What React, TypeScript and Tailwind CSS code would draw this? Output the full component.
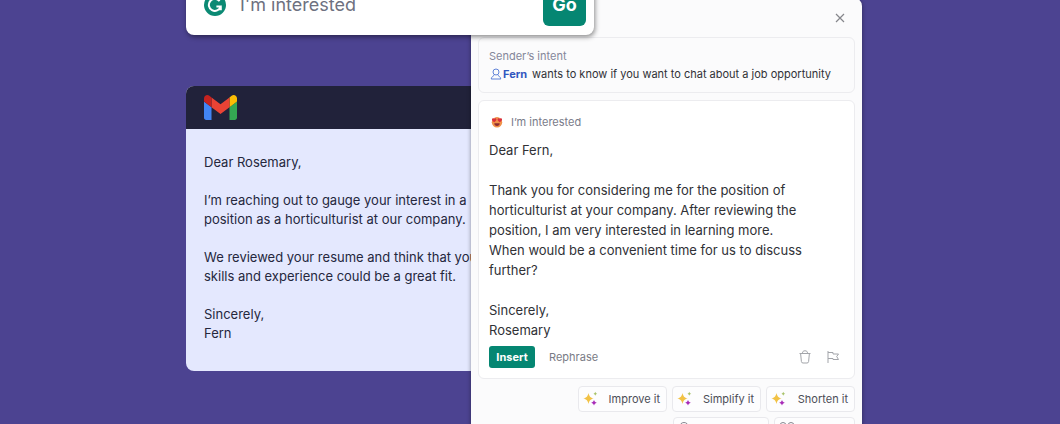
import React from 'react';

interface Action {
  label: string;
}

const actions: Action[] = [
  { label: 'Improve it' },
  { label: 'Simplify it' },
  { label: 'Shorten it' },
];

const GrammarlyLogo = () => (
  <svg className="size-[22px] shrink-0" viewBox="0 0 22 22" fill="none">
    <circle cx="11" cy="11" r="11" fill="#0b8a74" />
    <path
      d="M15.6 7.2A6 6 0 1 0 16.6 12.6H12.4M16.8 12.6V16.2"
      stroke="white"
      strokeWidth="2"
    />
  </svg>
);

const GmailLogo = () => (
  <svg className="h-[25px] w-[33px]" viewBox="52 42 88 66">
    <path fill="#4285f4" d="M58 108h14V74L52 59v43c0 3.32 2.69 6 6 6" />
    <path fill="#34a853" d="M120 108h14c3.32 0 6-2.69 6-6V59l-20 15" />
    <path fill="#fbbc04" d="M120 48v26l20-15v-8c0-7.42-8.47-11.65-14.4-7.2" />
    <path fill="#ea4335" d="M72 74V48l24 18 24-18v26L96 92" />
    <path fill="#c5221f" d="M52 51v8l20 15V48l-5.6-4.2c-5.94-4.45-14.4-.22-14.4 7.2" />
  </svg>
);

const PersonIcon = () => (
  <svg className="size-3 shrink-0" viewBox="0 0 12 12" fill="none" stroke="#5f82d8">
    <circle cx="6" cy="4" r="3" />
    <path d="M4.4 6.6C4.2 8 1.5 8.2 1.2 11h9.6C10.5 8.2 7.8 8 7.6 6.6" strokeLinejoin="round" />
  </svg>
);

const HeartEyesIcon = () => (
  <svg className="size-3 shrink-0" viewBox="0 0 12 12">
    <circle cx="6" cy="6.2" r="5.2" fill="#f0914a" />
    <path
      fill="#d9303e"
      d="M3.2 6.2C1 4.8.6 3.5 1.2 2.7c.6-.7 1.6-.5 2 .3.4-.8 1.4-1 2-.3.6.8.2 2.1-2 3.5zM8.8 6.2C6.6 4.8 6.2 3.5 6.8 2.7c.6-.7 1.6-.5 2 .3.4-.8 1.4-1 2-.3.6.8.2 2.1-2 3.5z"
    />
    <path fill="#8e2c30" d="M3.3 7.2h5.4c0 1.7-1.2 2.8-2.7 2.8S3.3 8.9 3.3 7.2z" />
  </svg>
);

const CloseIcon = () => (
  <svg className="size-[10px]" viewBox="0 0 10 10" stroke="#85868c" strokeWidth="1.2">
    <path d="M1 1l8 8M9 1L1 9" />
  </svg>
);

const TrashIcon = () => (
  <svg className="h-[14px] w-3" viewBox="0 0 12 14" fill="none" stroke="#a3a5aa">
    <path d="M.5 3.500h11M3.500 3.200C3.500 1.500 4.300.8 6 .8s2.500.7 2.500 2.400M1.600 3.500l.8 8c.1 1 .6 1.500 1.600 1.500h4c1 0 1.500-.5 1.600-1.500l.8-8" />
  </svg>
);

const FlagIcon = () => (
  <svg className="size-3" viewBox="0 0 12 12" fill="none" stroke="#a3a5aa">
    <path d="M1 0v12M1 1.500h5v1.500h5.500L9.700 5.500l1.800 3H6V7.500H1" />
  </svg>
);

const SparkleIcon = () => (
  <svg className="size-4 shrink-0" viewBox="0 0 16 16">
    <path fill="#f2c245" d="M5.500 2c.8 3.300 1.800 4.600 5.200 5.500-3.400.9-4.400 2.200-5.200 5.500C4.700 9.700 3.700 8.400.3 7.500 3.700 6.600 4.700 5.300 5.500 2z" />
    <path fill="#a9c36b" d="M12.300.8c.4 1.200.8 1.600 2 2-1.200.4-1.600.8-2 2-.4-1.200-.8-1.600-2-2 1.200-.4 1.600-.8 2-2z" />
    <path fill="#a82bb8" d="M11 9c.6 1.700 1.100 2.200 2.800 2.800-1.700.6-2.200 1.100-2.800 2.800-.6-1.700-1.100-2.200-2.800-2.800C9.900 11.200 10.400 10.700 11 9z" />
  </svg>
);

const PromptBar = () => (
  <form className="z-20 col-span-2 col-start-1 row-start-1 flex items-center gap-[14px] self-start rounded-lg bg-white py-[9px] pr-2 pl-[18px] shadow-[1px_2px_5px_rgba(0,0,0,0.45)]">
    <GrammarlyLogo />
    <input
      type="text"
      aria-label="Prompt"
      defaultValue="I'm interested"
      className="min-w-0 flex-1 text-lg text-[#6e7180] outline-none"
    />
    <button type="button" className="h-[43px] w-[43px] rounded-md bg-[#058672] text-lg font-bold text-white">
      Go
    </button>
  </form>
);

const Email = () => (
  <article className="col-span-2 col-start-1 row-start-1 mt-28 self-start overflow-hidden rounded-lg bg-[#e4e8fe] text-[13px] leading-[19px] text-[#25273d]">
    <header className="flex h-[43px] items-center bg-[#21223a] px-[18px]">
      <GmailLogo />
    </header>
    <div className="space-y-[19px] px-[18px] pt-6 pb-7">
      <p>Dear Rosemary,</p>
      <p className="whitespace-nowrap">
        I’m reaching out to gauge your interest in a
        <br />
        position as a horticulturist at our company.
      </p>
      <p className="whitespace-nowrap">
        We reviewed your resume and think that your
        <br />
        skills and experience could be a great fit.
      </p>
      <p>
        Sincerely,
        <br />
        Fern
      </p>
    </div>
  </article>
);

const Reply = () => (
  <section className="rounded-md border border-[#ececef] bg-white px-[10px] pt-[11px] pb-[10px]">
    <div className="flex h-5 items-center gap-2 pl-[2px] text-[11px] text-[#797b89]">
      <HeartEyesIcon />
      I’m interested
    </div>
    <div className="mt-2 space-y-5 text-[13px] leading-5 text-[#303136]">
      <p>Dear Fern,</p>
      <p>
        Thank you for considering me for the position of
        <br />
        horticulturist at your company. After reviewing the
        <br />
        position, I am very interested in learning more.
        <br />
        When would be a convenient time for us to discuss
        <br />
        further?
      </p>
      <p>
        Sincerely,
        <br />
        Rosemary
      </p>
    </div>
    <div className="mt-[6px] flex h-[22px] items-center text-[11px]">
      <button type="button" className="h-full w-[46px] rounded-[3px] bg-[#058672] font-bold text-white">
        Insert
      </button>
      <button type="button" className="ml-[14px] text-[#797b85]">
        Rephrase
      </button>
      <div className="mr-[5px] ml-auto flex items-center gap-4">
        <button type="button" aria-label="Delete">
          <TrashIcon />
        </button>
        <button type="button" aria-label="Report">
          <FlagIcon />
        </button>
      </div>
    </div>
  </section>
);

const chip = 'flex h-[26px] items-center rounded-sm border border-[#e9e9ed] bg-[#fdfdfe] pr-[6px] pl-1';

const AssistantPanel = () => (
  <aside className="z-10 col-span-2 col-start-2 row-start-1 mt-6 flex flex-col rounded-lg bg-[#fbfbfc] px-[7px] pb-2 shadow-[0_1px_4px_rgba(0,0,0,0.4)]">
    <header className="flex h-[39px] items-center justify-end pr-[10px]">
      <button type="button" aria-label="Close">
        <CloseIcon />
      </button>
    </header>
    <section className="mb-[7px] rounded-md border border-[#ececef] px-[10px] pt-[9px] pb-[9px] text-[11px] leading-[18px]">
      <h2 className="text-[#85879a]">Sender’s intent</h2>
      <p className="flex items-center pl-px text-[#303136]">
        <PersonIcon />
        <b className="mr-[5px] ml-px text-[#3157c0]">Fern</b>
        wants to know if you want to chat about a job opportunity
      </p>
    </section>
    <Reply />
    <div className="mt-[7px] flex flex-wrap justify-end gap-x-[5px] gap-y-[5px] text-[11px] text-[#4c4d57]">
      {actions.map((action) => (
        <button key={action.label} type="button" className={`${chip} w-[89px] justify-between`}>
          <SparkleIcon />
          {action.label}
        </button>
      ))}
      <button type="button" aria-label="Tone" className={`${chip} w-[96px]`}>
        <svg className="size-4" viewBox="0 0 16 16" fill="none" stroke="#85868f">
          <circle cx="6" cy="5" r="4.5" />
        </svg>
      </button>
      <button type="button" aria-label="Audience" className={`${chip} w-[81px]`}>
        <svg className="size-4" viewBox="0 0 16 16" fill="none" stroke="#85868f">
          <circle cx="4" cy="3.5" r="3" />
          <circle cx="12" cy="3.5" r="3" />
        </svg>
      </button>
    </div>
  </aside>
);

export default function App() {
  return (
    <main className="flex h-screen items-start justify-center overflow-hidden bg-[#4c4391] pr-3 font-['Inter',sans-serif]">
      <div className="-mt-[26px] grid w-full max-w-[676px] grid-cols-[285fr_123fr_268fr]">
        <PromptBar />
        <Email />
        <AssistantPanel />
      </div>
    </main>
  );
}
